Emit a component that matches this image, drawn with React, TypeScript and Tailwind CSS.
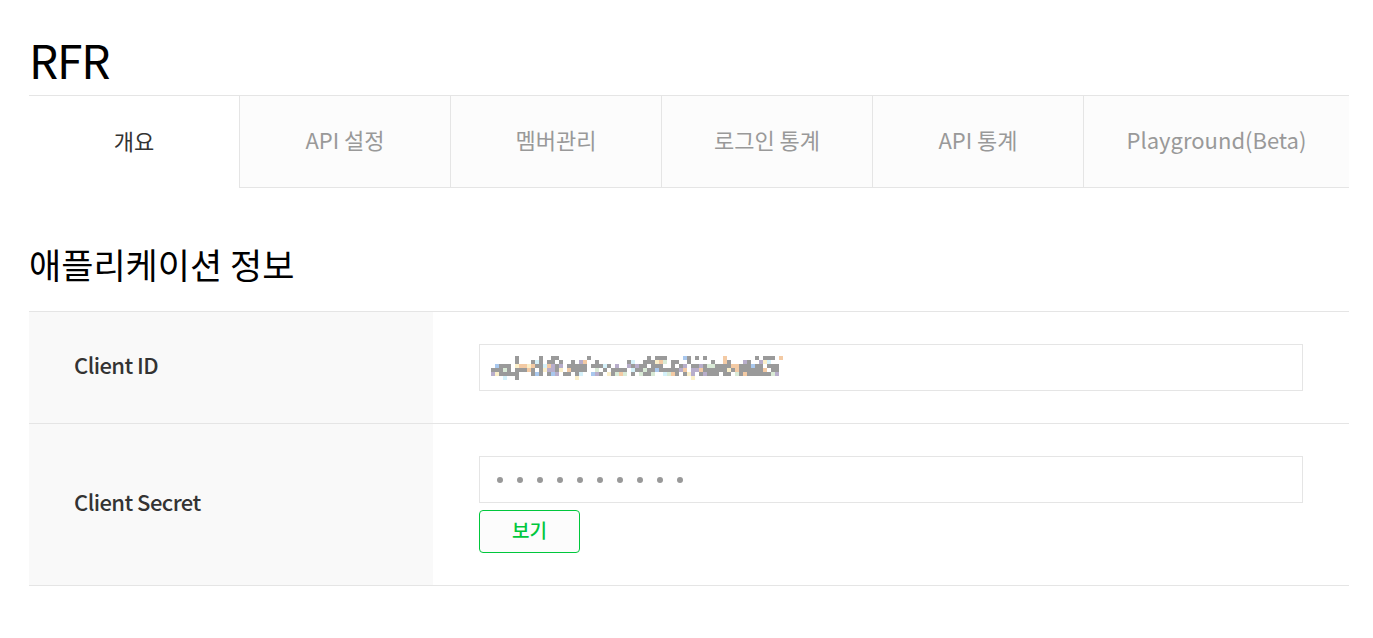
import React from "react";

const tabs = ["개요", "API 설정", "멤버관리", "로그인 통계", "API 통계", "Playground(Beta)"];

// pixelated (masked) client id, drawn as a mosaic
const Mosaic = () => {
  const cols = 73;
  const rows = 6;
  const light = ["#a9c8ee", "#f3caa4", "#fbefc9", "#d5f1fa", "#b8aecb", "#d9ead6"];
  const cells: { x: number; y: number; c: string }[] = [];
  let seed = 11;
  const rnd = () => {
    seed = (seed * 1103515245 + 12345) % 2147483648;
    return seed / 2147483648;
  };
  for (let cx = 0; cx < cols; cx++) {
    for (let cy = 0; cy < rows; cy++) {
      const r = rnd();
      let density = cy === 0 ? 0.25 : cy === 1 ? 0.4 : cy === 5 ? 0.05 : 0.8;
      if (cx < 10 && cy < 2) density = cx === 6 ? 0.9 : 0.05;
      if (r > density) continue;
      const g = rnd();
      const c = g < 0.65 ? "#9a9a9a" : light[Math.floor(rnd() * light.length)];
      cells.push({ x: cx * 4, y: cy * 4, c });
    }
  }
  return (
    <svg width={cols * 4} height={rows * 4} viewBox={`0 0 ${cols * 4} ${rows * 4}`} shapeRendering="crispEdges">
      {cells.map((p, i) => (
        <rect key={i} x={p.x} y={p.y} width={4} height={4} fill={p.c} />
      ))}
    </svg>
  );
};

const App = () => {
  return (
    <div className="min-h-screen bg-white px-[29px] pt-[30px] text-black" style={{ fontFamily: '"Noto Sans CJK KR", sans-serif' }}>
      <div className="w-[1320px]">
        <h1 className="h-[65px] text-[46px] leading-[58px] font-normal tracking-tight">RFR</h1>

        {/* tabs */}
        <div className="flex h-[93px] border-t border-[#e5e5e5]">
          {tabs.map((t, i) => (
            <div
              key={t}
              className={
                i === 0
                  ? "flex w-[210px] items-center justify-center bg-white pb-[4px] text-[22px] text-[#333]"
                  : i === tabs.length - 1
                  ? "flex flex-1 items-center justify-center border-b border-l border-[#e5e5e5] bg-[#fcfcfc] pb-[4px] text-[22px] text-[#999]"
                  : "flex w-[211px] items-center justify-center border-b border-l border-[#e5e5e5] bg-[#fcfcfc] pb-[4px] text-[22px] text-[#999]"
              }
            >
              {t}
            </div>
          ))}
        </div>

        <h2 className="mt-[52px] text-[35px] leading-[48px] font-normal">애플리케이션 정보</h2>

        <div className="mt-[23px] border-t border-[#e5e5e5]">
          <div className="flex border-b border-[#e5e5e5]">
            <div className="flex w-[404px] items-center bg-[#f9f9f9] pb-[6px] pl-[45px] text-[22px] font-medium tracking-tight text-[#333]">
              Client ID
            </div>
            <div className="flex-1 px-[46px] py-8">
              <div className="flex h-[47px] items-center border border-[#e5e5e5] pl-[11px]">
                <Mosaic />
              </div>
            </div>
          </div>

          <div className="flex border-b border-[#e5e5e5]">
            <div className="flex w-[404px] items-center bg-[#f9f9f9] pb-[6px] pl-[45px] text-[22px] font-medium tracking-tight text-[#333]">
              Client Secret
            </div>
            <div className="flex-1 px-[46px] py-8">
              <div className="flex h-[47px] items-center gap-[14px] border border-[#e5e5e5] pl-[17px]">
                {Array.from({ length: 10 }).map((_, i) => (
                  <span key={i} className="h-[6px] w-[6px] rounded-full bg-[#999]" />
                ))}
              </div>
              <button className="mt-[7px] flex h-[43px] w-[101px] items-center justify-center rounded-[4px] border border-[#00c73c] bg-[#fcfcfc] pb-[3px] text-[19px] font-medium text-[#00c73c]">
                보기
              </button>
            </div>
          </div>
        </div>
      </div>
    </div>
  );
};

export default App;
